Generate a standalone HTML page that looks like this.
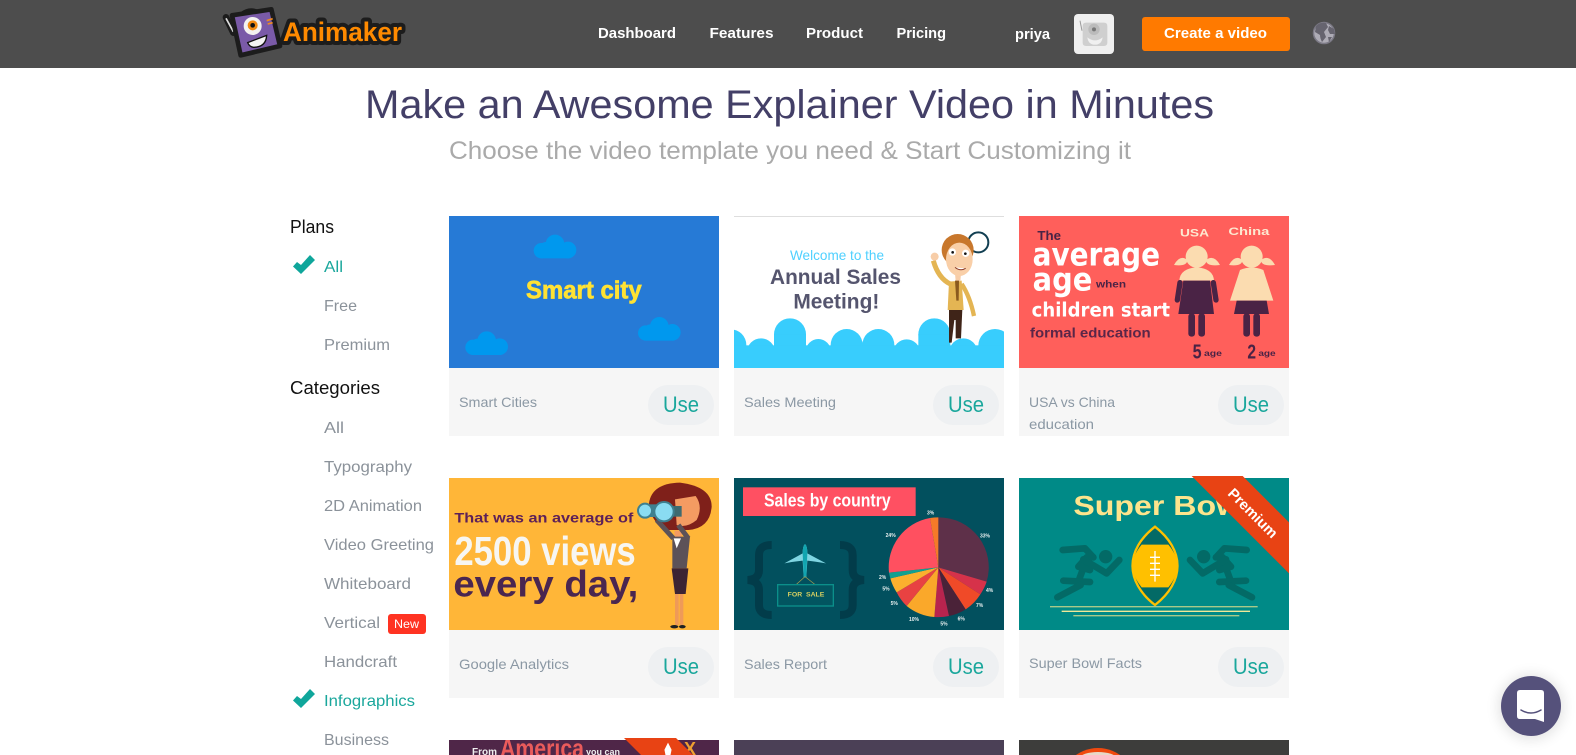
<!DOCTYPE html>
<html lang="en">
<head>
<meta charset="utf-8">
<title>Animaker Templates</title>
<style>
html,body{margin:0;padding:0;background:#fff;width:1576px;height:755px;overflow:hidden}
svg{display:block}
text{font-family:"Liberation Sans",sans-serif;white-space:pre}
.nav{font-size:15px;font-weight:700;fill:#fff}
.h{font-size:18px;fill:#111}
.s{font-size:16px;fill:#8b929a}
.on{font-size:16px;fill:#1aa79c}
.n{font-size:14px;fill:#8b98a4}
.u{font-size:22px;fill:#1aa79c}
.d{font-family:"DejaVu Sans",sans-serif;font-weight:700}
.pc{font-size:15px;fill:#e8f0f0;font-weight:700}
</style>
</head>
<body>
<svg xmlns="http://www.w3.org/2000/svg" width="1576" height="755" viewBox="0 0 1576 755">
<defs>
<filter id="sh" x="-40%" y="-40%" width="180%" height="180%"><feGaussianBlur stdDeviation="7"/></filter>
<path id="ck" d="M0 11.500 L4 7 L8 10 L17 0 L22 5 L8 19 Z" fill="#0fa69b"/>
<g id="cl"><circle cx="65" cy="34" r="28"/><circle cx="38" cy="48" r="20"/><circle cx="104" cy="52" r="25"/><circle cx="24" cy="54" r="23"/><rect x="24" y="48" width="84" height="29"/></g>
<g id="use"><rect width="66" height="40" rx="20" fill="#eef0f2"/><text x="15" y="27" class="u" textLength="36" lengthAdjust="spacingAndGlyphs">Use</text></g>
<g id="run" fill="none" stroke="#036a66" stroke-width="20" stroke-linecap="round" stroke-linejoin="round">
<circle cx="287" cy="260" r="20" fill="#036a66" stroke="none"/>
<path d="M158 240 L225 235 L250 262"/>
<path d="M232 262 L205 335"/>
<path d="M240 300 L205 290 L230 262 L250 262"/>
<path d="M160 332 L240 336"/>
<path d="M142 382 L212 345"/>
<path d="M220 268 L290 310 L328 270"/>
</g>
</defs>

<!-- header -->
<rect width="1576" height="68" fill="#4d4d4d"/>
<g transform="translate(200,0) scale(.3333)">
<path d="M78 52 L100 98" stroke="#1c1c1c" stroke-width="20" stroke-linecap="round"/>
<path d="M78 55 L100 95" stroke="#ddd" stroke-width="5"/>
<path d="M125 44 Q150 24 178 40" stroke="#1c1c1c" stroke-width="16" fill="none"/>
<path d="M96 46 L214 28 L240 138 L122 166 Z" fill="#7a5aa8" stroke="#1c1c1c" stroke-width="14" stroke-linejoin="round"/>
<circle cx="158" cy="78" r="27" fill="#f4f2f0"/><circle cx="158" cy="76" r="15" fill="#f18a12"/><circle cx="158" cy="76" r="7" fill="#111"/>
<path d="M143 128 L200 106 Q198 142 160 142 Q148 140 143 128Z" fill="#f4f4f4" stroke="#111" stroke-width="4"/>
<path d="M200 62 L218 56 M203 72 L218 68" stroke="#f08a20" stroke-width="5"/>
</g>
<text x="283" y="41" font-size="27" font-weight="700" fill="#ff8a00" stroke="#1c1c1c" stroke-width="8" stroke-linejoin="round" paint-order="stroke" textLength="119" lengthAdjust="spacingAndGlyphs">Animaker</text>

<text x="598" y="38" class="nav" textLength="78" lengthAdjust="spacingAndGlyphs">Dashboard</text>
<text x="709.500" y="38" class="nav" textLength="64" lengthAdjust="spacingAndGlyphs">Features</text>
<text x="806" y="38" class="nav" textLength="57" lengthAdjust="spacingAndGlyphs">Product</text>
<text x="896.500" y="38" class="nav" textLength="49.500" lengthAdjust="spacingAndGlyphs">Pricing</text>
<text x="1015" y="39" class="nav" textLength="35" lengthAdjust="spacingAndGlyphs">priya</text>

<rect x="1074" y="14" width="40" height="40" rx="4" fill="#efefef"/>
<g transform="translate(1000,0) scale(.3333)">
<path d="M240 62 L246 92" stroke="#999" stroke-width="3"/>
<path d="M248 78 Q248 68 258 68 L312 68 Q322 68 322 78 L322 128 Q322 138 312 138 L258 138 Q248 138 248 128Z" fill="#cfcfcf"/>
<circle cx="282" cy="88" r="17" fill="#bbb"/><circle cx="282" cy="88" r="6" fill="#777"/>
<path d="M262 112 Q285 130 308 112 Q305 134 285 134 Q265 134 262 112Z" fill="#f0f0f0"/>
</g>
<rect x="1142" y="17" width="148" height="34" rx="3" fill="#ff7a00"/>
<text x="1164" y="38" class="nav" textLength="103" lengthAdjust="spacingAndGlyphs">Create a video</text>
<circle cx="1324" cy="33" r="10.500" fill="#aeacb6" stroke="#7c7a86" stroke-width="1.500"/>
<path d="M1316 26 Q1320 22 1326 23 L1328 27 L1324 32 L1326 37 L1322 42 Q1320 38 1320 35 L1315 32 Z M1329 26 L1334 29 L1335 34 L1330 34 L1328 30 Z M1328 37 L1332 37 L1329 42 Z" fill="#66646f"/>

<!-- titles -->
<text x="365" y="118" font-size="40" fill="#433f67" textLength="849" lengthAdjust="spacingAndGlyphs">Make an Awesome Explainer Video in Minutes</text>
<text x="449" y="159" font-size="25" fill="#aaaaaa" textLength="682" lengthAdjust="spacingAndGlyphs">Choose the video template you need &amp; Start Customizing it</text>

<!-- sidebar -->
<text x="290" y="233" class="h" textLength="44" lengthAdjust="spacingAndGlyphs">Plans</text>
<use href="#ck" x="293" y="255"/>
<text x="324" y="272" class="on" textLength="19" lengthAdjust="spacingAndGlyphs">All</text>
<text x="324" y="311" class="s" textLength="33" lengthAdjust="spacingAndGlyphs">Free</text>
<text x="324" y="350" class="s" textLength="66" lengthAdjust="spacingAndGlyphs">Premium</text>
<text x="290" y="394" class="h" textLength="90" lengthAdjust="spacingAndGlyphs">Categories</text>
<text x="324" y="433" class="s" textLength="20" lengthAdjust="spacingAndGlyphs">All</text>
<text x="324" y="472" class="s" textLength="88" lengthAdjust="spacingAndGlyphs">Typography</text>
<text x="324" y="511" class="s" textLength="98" lengthAdjust="spacingAndGlyphs">2D Animation</text>
<text x="324" y="550" class="s" textLength="110" lengthAdjust="spacingAndGlyphs">Video Greeting</text>
<text x="324" y="589" class="s" textLength="87" lengthAdjust="spacingAndGlyphs">Whiteboard</text>
<text x="324" y="628" class="s" textLength="56" lengthAdjust="spacingAndGlyphs">Vertical</text>
<rect x="388" y="614" width="38" height="20" rx="3" fill="#ff3322"/>
<text x="394" y="628" font-size="12" fill="#fff" textLength="25" lengthAdjust="spacingAndGlyphs">New</text>
<text x="324" y="667" class="s" textLength="73" lengthAdjust="spacingAndGlyphs">Handcraft</text>
<use href="#ck" x="293" y="689"/>
<text x="324" y="706" class="on" textLength="91" lengthAdjust="spacingAndGlyphs">Infographics</text>
<text x="324" y="745" class="s" textLength="65" lengthAdjust="spacingAndGlyphs">Business</text>

<!-- card info panels -->
<g fill="#f6f6f6">
<rect x="449" y="368" width="270" height="68"/><rect x="734" y="368" width="270" height="68"/><rect x="1019" y="368" width="270" height="68"/>
<rect x="449" y="630" width="270" height="68"/><rect x="734" y="630" width="270" height="68"/><rect x="1019" y="630" width="270" height="68"/>
</g>
<text x="459" y="407" class="n" textLength="78" lengthAdjust="spacingAndGlyphs">Smart Cities</text>
<text x="744" y="407" class="n" textLength="92" lengthAdjust="spacingAndGlyphs">Sales Meeting</text>
<text x="1029" y="407" class="n" textLength="86" lengthAdjust="spacingAndGlyphs">USA vs China</text>
<text x="1029" y="429" class="n" textLength="65" lengthAdjust="spacingAndGlyphs">education</text>
<text x="459" y="669" class="n" textLength="110" lengthAdjust="spacingAndGlyphs">Google Analytics</text>
<text x="744" y="669" class="n" textLength="83" lengthAdjust="spacingAndGlyphs">Sales Report</text>
<text x="1029" y="668" class="n" textLength="113" lengthAdjust="spacingAndGlyphs">Super Bowl Facts</text>
<use href="#use" x="648" y="385"/><use href="#use" x="933" y="385"/><use href="#use" x="1218" y="385"/>
<use href="#use" x="648" y="647"/><use href="#use" x="933" y="647"/><use href="#use" x="1218" y="647"/>

<!-- card 1 -->
<svg x="449" y="216" width="270" height="152" viewBox="27 18 810 456">
<rect x="27" y="18" width="810" height="456" fill="#267ad6"/>
<g fill="#0098ee"><use href="#cl" x="280" y="68"/><use href="#cl" x="75" y="358"/><use href="#cl" x="593" y="315"/></g>
<text x="258" y="265" font-size="75" font-weight="700" fill="#ffe233" stroke="#ffe233" stroke-width="2" textLength="347" lengthAdjust="spacingAndGlyphs">Smart city</text>
</svg>

<!-- card 2 -->
<svg x="734" y="216" width="270" height="152" viewBox="27 18 810 456">
<rect x="27" y="18" width="810" height="456" fill="#fff"/>
<rect x="27" y="18" width="810" height="3" fill="#dedede"/>
<text x="195" y="150" font-size="42" fill="#4fd0ff" textLength="282" lengthAdjust="spacingAndGlyphs">Welcome to the</text>
<text x="135" y="222" font-size="65" font-weight="700" fill="#55556e" textLength="393" lengthAdjust="spacingAndGlyphs">Annual Sales</text>
<text x="205" y="296" font-size="65" font-weight="700" fill="#55556e" textLength="258" lengthAdjust="spacingAndGlyphs">Meeting!</text>
<g fill="#38cdfd">
<circle cx="17" cy="405" r="47"/><circle cx="108" cy="427" r="42"/><circle cx="195" cy="373" r="48"/><rect x="147" y="373" width="96" height="100"/>
<circle cx="280" cy="425" r="38"/><circle cx="365" cy="405" r="48"/><circle cx="460" cy="405" r="48"/><circle cx="545" cy="428" r="40"/>
<circle cx="628" cy="373" r="48"/><rect x="580" y="373" width="96" height="100"/><circle cx="715" cy="427" r="42"/><circle cx="810" cy="407" r="50"/>
<rect x="27" y="406" width="810" height="70"/>
</g>
<circle cx="760" cy="97" r="30" fill="#fff" stroke="#123f52" stroke-width="6"/>
<path d="M672 298 L712 298 L708 385 L692 385 L692 330 L688 330 L680 398 L672 398Z" fill="#3f2418"/>
<path d="M672 215 L710 212 L716 300 L668 300Z" fill="#e4b553"/>
<path d="M676 222 Q640 205 625 152" fill="none" stroke="#e4b553" stroke-width="15"/>
<path d="M710 222 Q735 260 747 318" fill="none" stroke="#e4b553" stroke-width="13"/>
<circle cx="629" cy="140" r="12" fill="#f7cda8"/>
<path d="M690 190 L708 190 L706 214 L692 214Z" fill="#f7cda8"/>
<path d="M690 212 L702 212 L701 272 L694 272Z" fill="#8a5a1e"/>
<ellipse cx="698" cy="120" rx="48" ry="48" fill="#c8772c"/>
<ellipse cx="703" cy="148" rx="40" ry="50" fill="#f9cfa8"/>
<circle cx="682" cy="126" r="11" fill="#fff"/><circle cx="722" cy="130" r="11" fill="#fff"/>
<circle cx="683" cy="127" r="4" fill="#111"/><circle cx="721" cy="131" r="4" fill="#111"/>
<path d="M690 172 Q706 185 722 175" fill="#fff" stroke="#8a3b2a" stroke-width="3"/>
</svg>

<!-- card 3 -->
<svg x="1019" y="216" width="270" height="152" viewBox="27 18 810 456">
<rect x="27" y="18" width="810" height="456" fill="#ff5f5b"/>
<text x="82" y="90" font-size="38" font-weight="700" fill="#4a2345" textLength="71" lengthAdjust="spacingAndGlyphs">The</text>
<text x="68" y="167" font-size="95" class="d" fill="#fff" textLength="382" lengthAdjust="spacingAndGlyphs">average</text>
<text x="68" y="242" font-size="95" class="d" fill="#fff" textLength="179" lengthAdjust="spacingAndGlyphs">age</text>
<text x="258" y="232" font-size="30" font-weight="700" fill="#4a2345" textLength="90" lengthAdjust="spacingAndGlyphs">when</text>
<text x="65" y="320" font-size="58" class="d" fill="#fff" textLength="415" lengthAdjust="spacingAndGlyphs">children start</text>
<text x="60" y="382" font-size="42" font-weight="700" fill="#5a2648" textLength="362" lengthAdjust="spacingAndGlyphs">formal education</text>
<text x="510" y="80" font-size="34" font-weight="700" fill="#fde8d0" textLength="87" lengthAdjust="spacingAndGlyphs">USA</text>
<text x="655" y="75" font-size="34" font-weight="700" fill="#fde8d0" textLength="123" lengthAdjust="spacingAndGlyphs">China</text>
<g fill="#fbdcb0">
<circle cx="560" cy="140" r="33"/><path d="M492 165 Q510 132 532 150 Q532 170 492 165Z M630 165 Q612 132 588 150 Q588 170 630 165Z"/>
<path d="M508 212 Q510 175 560 172 Q610 175 612 212Z"/>
<circle cx="725" cy="140" r="33"/><path d="M657 165 Q675 132 697 150 Q697 170 657 165Z M795 165 Q777 132 753 150 Q753 170 795 165Z"/>
<path d="M690 180 Q725 165 760 180 L790 272 L660 272Z"/>
</g>
<g fill="#4a2345">
<path d="M520 212 L600 212 L612 312 L505 312Z"/>
<path d="M510 218 L502 270 M610 218 L618 270" stroke="#4a2345" stroke-width="16" stroke-linecap="round"/>
<rect x="535" y="310" width="20" height="70" rx="9"/><rect x="565" y="310" width="20" height="70" rx="9"/>
<path d="M680 272 L770 272 L777 312 L672 312Z"/>
<rect x="700" y="310" width="20" height="70" rx="9"/><rect x="730" y="310" width="20" height="70" rx="9"/>
</g>
<text x="548" y="445" font-size="62" font-weight="700" fill="#4a2345" textLength="27" lengthAdjust="spacingAndGlyphs">5</text>
<text x="582" y="438" font-size="24" font-weight="700" fill="#4a2345" textLength="54" lengthAdjust="spacingAndGlyphs">age</text>
<text x="712" y="445" font-size="62" font-weight="700" fill="#4a2345" textLength="26" lengthAdjust="spacingAndGlyphs">2</text>
<text x="745" y="438" font-size="24" font-weight="700" fill="#4a2345" textLength="52" lengthAdjust="spacingAndGlyphs">age</text>
</svg>

<!-- card 4 -->
<svg x="449" y="478" width="270" height="152" viewBox="12 24 810 456">
<rect x="12" y="24" width="810" height="456" fill="#ffb638"/>
<text x="28" y="158" font-size="42" font-weight="700" fill="#5d2058" textLength="537" lengthAdjust="spacingAndGlyphs">That was an average of</text>
<text x="28" y="285" font-size="122" font-weight="700" fill="#f7f6f2" textLength="544" lengthAdjust="spacingAndGlyphs">2500 views</text>
<text x="25" y="380" font-size="112" font-weight="700" fill="#4a2650" textLength="555" lengthAdjust="spacingAndGlyphs">every day,</text>
<path d="M612 100 Q620 40 705 38 Q800 50 800 110 Q795 175 730 180 L660 180 Q615 150 612 100Z" fill="#7f201a"/>
<path d="M690 88 L752 78 Q775 110 755 150 Q725 175 695 165Z" fill="#f49b62"/>
<path d="M688 182 L712 182 L708 210 L690 210Z" fill="#f49b62"/>
<path d="M635 150 L685 205 M700 165 L730 205" stroke="#5c5258" stroke-width="15" fill="none"/>
<path d="M682 200 L735 200 L725 295 L682 295Z" fill="#5c5258"/>
<path d="M686 205 L708 205 L695 235Z" fill="#fff"/>
<path d="M680 295 L730 295 L722 372 L690 372Z" fill="#3d2433"/>
<rect x="690" y="372" width="11" height="93" fill="#ef9a58"/><rect x="704" y="372" width="11" height="93" fill="#ef9a58"/>
<ellipse cx="688" cy="470" rx="12" ry="5" fill="#222"/><ellipse cx="712" cy="470" rx="10" ry="5" fill="#222"/>
<rect x="600" y="103" width="60" height="38" fill="#3e8090"/>
<rect x="670" y="108" width="40" height="32" fill="#3e6a70"/>
<circle cx="600" cy="122" r="21" fill="#8adcf2" stroke="#3e8090" stroke-width="6"/>
<circle cx="657" cy="125" r="29" fill="#8adcf2" stroke="#3e8090" stroke-width="6"/>
</svg>

<!-- card 5 -->
<svg x="734" y="478" width="270" height="152" viewBox="27 24 810 456">
<rect x="27" y="24" width="810" height="456" fill="#02505e"/>
<rect x="54" y="52" width="518" height="86" fill="#ff5062"/>
<text x="117" y="110" font-size="54" font-weight="700" fill="#fff" textLength="380" lengthAdjust="spacingAndGlyphs">Sales by country</text>
<g fill="none" stroke="#023c4a" stroke-width="24">
<path d="M140 225 Q102 225 102 255 L102 300 Q102 328 68 330 Q102 332 102 360 L102 405 Q102 435 140 435"/>
<path d="M345 225 Q383 225 383 255 L383 300 Q383 328 417 330 Q383 332 383 360 L383 405 Q383 435 345 435"/>
</g>
<path d="M240 222 Q247 228 247 250 L303 280 Q270 275 247 272 L244 322 L236 322 L233 272 Q205 275 178 280 L233 250 Q233 228 240 222Z" fill="#7fd5e2"/>
<path d="M240 222 Q247 228 247 250 L244 322 L236 322 L233 250 Q233 228 240 222Z" fill="#12a5b0"/>
<path d="M240 320 L212 345 M240 320 L272 345" stroke="#a8a050" stroke-width="2"/>
<rect x="158" y="344" width="167" height="64" fill="#025560" stroke="#0b8f8a" stroke-width="4"/>
<text x="188" y="380" font-size="20" font-weight="700" fill="#d8d060" textLength="110" lengthAdjust="spacingAndGlyphs">FOR  SALE</text>
<path d="M640 292 L640 142 A150 150 0 0 1 785 335Z" fill="#5e3049"/>
<path d="M640 292 L785 335 A150 150 0 0 1 766 373Z" fill="#d6324a"/>
<path d="M640 292 L766 373 A150 150 0 0 1 722 418Z" fill="#f04a28"/>
<path d="M640 292 L722 418 A150 150 0 0 1 672 438Z" fill="#4a2238"/>
<path d="M640 292 L672 438 A150 150 0 0 1 628 441Z" fill="#b8244e"/>
<path d="M640 292 L628 441 A150 150 0 0 1 545 408Z" fill="#faa82a"/>
<path d="M640 292 L545 408 A150 150 0 0 1 515 367Z" fill="#e84242"/>
<path d="M640 292 L515 367 A150 150 0 0 1 496 325Z" fill="#fbb02e"/>
<path d="M640 292 L496 325 A150 150 0 0 1 492 308Z" fill="#11a090"/>
<path d="M640 292 L492 308 A150 150 0 0 1 615 144Z" fill="#ff5060"/>
<path d="M640 292 L615 144 A150 150 0 0 1 640 142Z" fill="#f57a28"/>
<text x="765" y="202" class="pc">33%</text><text x="783" y="366" class="pc">4%</text><text x="753" y="411" class="pc">7%</text>
<text x="698" y="452" class="pc">6%</text><text x="646" y="466" class="pc">5%</text><text x="552" y="453" class="pc">10%</text>
<text x="497" y="405" class="pc">5%</text><text x="472" y="362" class="pc">5%</text><text x="462" y="327" class="pc">2%</text>
<text x="482" y="201" class="pc">24%</text><text x="606" y="133" class="pc">3%</text>
</svg>

<!-- card 6 -->
<svg x="1019" y="478" width="270" height="152" viewBox="27 24 810 456" overflow="visible">
<rect x="27" y="24" width="810" height="456" fill="#008a87"/>
<text x="190" y="135" font-size="84" font-weight="700" fill="#fde48c" textLength="530" lengthAdjust="spacingAndGlyphs">Super Bowl</text>
<use href="#run"/>
<g transform="translate(868,0) scale(-1,1)"><use href="#run"/></g>
<path d="M435 170 C525 240 525 335 435 405 C345 335 345 240 435 170Z" fill="#036a66" stroke="#ffc000" stroke-width="7"/>
<path d="M395 224 L475 224 Q528 287 475 352 L395 352 Q342 287 395 224Z" fill="#ffc000"/>
<path d="M435 243 L435 335 M420 262 L450 262 M420 280 L450 280 M420 298 L450 298 M420 316 L450 316" stroke="#fff" stroke-width="4"/>
<path d="M120 410 L743 410 M190 437 L688 437" stroke="#a8c98a" stroke-width="4"/>
<path d="M155 424 L720 424" stroke="#f0e898" stroke-width="4"/>
<path d="M545 18 L698 18 L837 157 L837 310Z" fill="#e84314"/>
<text transform="translate(728,130) rotate(45)" text-anchor="middle" y="14" font-size="44" font-weight="700" fill="#fff" textLength="190" lengthAdjust="spacingAndGlyphs">Premium</text>
</svg>

<!-- row 3 -->
<svg x="449" y="740" width="270" height="15" viewBox="449 740 270 15">
<rect x="449" y="740" width="270" height="15" fill="#4f2648"/>
<text x="472" y="755" font-size="10" font-weight="700" fill="#eee">From</text>
<text x="500" y="757" font-size="26" font-weight="700" fill="#ea5b5b" textLength="84" lengthAdjust="spacingAndGlyphs">America</text>
<text x="586" y="755" font-size="9" font-weight="700" fill="#eee">you can</text>
<text x="684" y="755" font-size="18" font-weight="700" fill="#f0a030">X</text>
</svg>
<path d="M624 738 L676 738 L693 755 L641 755Z" fill="#e84314"/>
<path d="M667 755 L666 750 L668 746 L670 750 L669 755Z" fill="#fff" stroke="#fff" stroke-width="3"/>
<rect x="734" y="740" width="270" height="15" fill="#4b4056"/>
<rect x="1019" y="740" width="270" height="15" fill="#3d3d3b"/>
<svg x="1019" y="740" width="270" height="15" viewBox="1019 740 270 15">
<circle cx="1098" cy="786" r="38" fill="#f0490f"/>
<ellipse cx="1098" cy="758" rx="18" ry="6" fill="#e8d8c8"/>
</svg>

<!-- chat -->
<circle cx="1531" cy="707" r="32" fill="#000" opacity=".12" filter="url(#sh)"/>
<circle cx="1531" cy="706" r="30" fill="#55517b"/>
<path d="M1520 690 L1541 690 Q1544 690 1544 693 L1544 722 L1535 719 L1520 719 Q1517 719 1517 716 L1517 693 Q1517 690 1520 690Z" fill="#fff"/>
<path d="M1521 710 Q1531 716 1541 710" fill="none" stroke="#55517b" stroke-width="1.500" stroke-linecap="round"/>
</svg>
</body>
</html>
